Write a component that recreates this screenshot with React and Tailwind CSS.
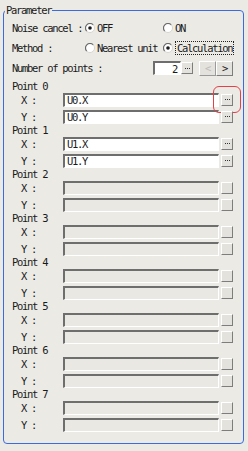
import React from 'react';

const font = { fontFamily: '"DejaVu Sans Mono", "Liberation Mono", monospace' };

const Radio = ({ checked }) => (
  <svg width="10" height="10" viewBox="0 0 10 10" className="shrink-0">
    <circle cx="5" cy="5" r="4.5" fill="#ffffff" />
    <path d="M1.8 8.2 A4.5 4.5 0 0 1 8.2 1.8" stroke="#6b6b6b" strokeWidth="1.2" fill="none" />
    <path d="M8.2 1.8 A4.5 4.5 0 0 1 1.8 8.2" stroke="#d6d5d0" strokeWidth="1" fill="none" />
    {checked && <circle cx="5" cy="5" r="1.8" fill="#1a1a1a" />}
  </svg>
);

const DotButton = ({ disabled, className = '' }) => (
  <div
    className={`w-[12px] h-[12px] flex items-center justify-center gap-[1px] bg-[#e3e2dd] border border-t-white border-l-white border-b-[#7d7d7d] border-r-[#7d7d7d] ${className}`}
  >
    {!disabled && (
      <>
        <span className="w-[1px] h-[1px] bg-[#333]" />
        <span className="w-[1px] h-[1px] bg-[#333]" />
        <span className="w-[1px] h-[1px] bg-[#333]" />
      </>
    )}
  </div>
);

const Field = ({ label, value, disabled, highlight }) => (
  <div className="h-[17px] flex items-center">
    <span className="w-[51px] pl-[9px]">{label} :</span>
    <div
      className={`w-[156px] h-[14px] flex items-center pl-[2px] border-t-2 border-l-2 border-b border-r border-t-[#6e6e6e] border-l-[#6e6e6e] border-b-white border-r-white ${
        disabled ? 'bg-[#e9e8e3]' : 'bg-white'
      }`}
    >
      {value}
    </div>
    <div className="relative ml-[2px]">
      <DotButton disabled={disabled} />
      {highlight && (
        <span className="absolute -left-[8px] -top-[8px] w-[28px] h-[27px] border-[1.5px] border-[#e5404a] rounded-[6px]" />
      )}
    </div>
  </div>
);

const points = [
  { x: 'U0.X', y: 'U0.Y' },
  { x: 'U1.X', y: 'U1.Y' },
  null,
  null,
  null,
  null,
  null,
  null,
];

export default function App() {
  return (
    <div
      className="w-[248px] h-[451px] bg-[#ebeae5] pl-[3px] pt-[4px] text-[10.5px] leading-[12px] tracking-[-1.3px] text-[#1a1a1a]"
      style={font}
    >
      <fieldset className="w-[241px] h-[440px] border border-[#3b6be2] rounded-[4px]">
        <legend className="ml-[1px] px-[1px] h-[12px]">Parameter</legend>

        <div className="pl-[8px] pt-[4px] flex flex-col gap-[4px]">
          <div className="h-[16px] flex items-center">
            <span className="w-[73px]">Noise cancel :</span>
            <div className="w-[78px] flex items-center gap-[2px]">
              <Radio checked />
              <span>OFF</span>
            </div>
            <div className="flex items-center gap-[2px]">
              <Radio />
              <span>ON</span>
            </div>
          </div>

          <div className="h-[16px] flex items-center">
            <span className="w-[73px]">Method :</span>
            <div className="w-[78px] flex items-center gap-[2px]">
              <Radio />
              <span>Nearest unit</span>
            </div>
            <div className="flex items-center gap-[2px]">
              <Radio checked />
              <span className="px-[1px] border border-dotted border-[#222]">Calculation</span>
            </div>
          </div>

          <div className="h-[16px] flex items-center">
            <span className="w-[141px]">Number of points :</span>
            <div className="w-[28px] h-[14px] flex items-center justify-end pr-[3px] bg-white border-t-2 border-l-2 border-b border-r border-t-[#6e6e6e] border-l-[#6e6e6e] border-b-white border-r-white">
              2
            </div>
            <DotButton />
            <div className="ml-[6px] w-[17px] h-[15px] flex items-center justify-center bg-[#e3e2dd] border border-t-white border-l-white border-b-[#9a9a9a] border-r-[#9a9a9a] text-[#bdbcb7]">
              &lt;
            </div>
            <div className="w-[17px] h-[15px] flex items-center justify-center bg-[#e3e2dd] border border-t-white border-l-white border-b-[#7d7d7d] border-r-[#7d7d7d]">
              &gt;
            </div>
          </div>
        </div>

        <div className="pl-[8px] mt-[5px] flex flex-col">
          {points.map((p, i) => (
            <div key={i} className="flex flex-col">
              <div className="h-[10px] flex items-center">Point {i}</div>
              <Field label="X" value={p ? p.x : ''} disabled={!p} highlight={i === 0} />
              <Field label="Y" value={p ? p.y : ''} disabled={!p} />
            </div>
          ))}
        </div>
      </fieldset>
    </div>
  );
}
